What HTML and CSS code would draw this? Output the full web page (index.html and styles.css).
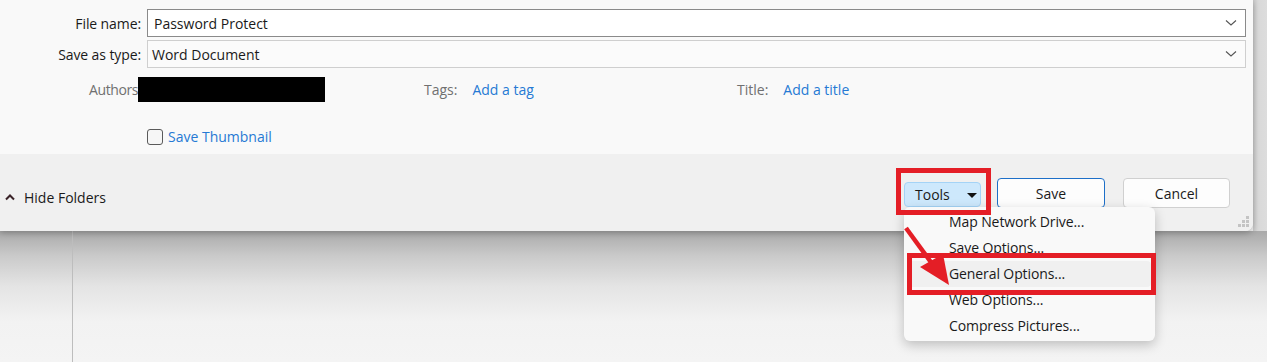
FILE: index.html
```html
<!DOCTYPE html>
<html>
<head>
  <title>Save As</title>
  <link rel="stylesheet" href="styles.css">
</head>
<body>
  <div class="screen">
    <div class="dialog">
      <!-- File fields -->
      <div class="fields">
        <div class="field-row">
          <label class="field-label">File name:</label>
          <div class="combo combo-active">
            <span>Password Protect</span>
            <svg class="chev" width="12" height="8" viewBox="0 0 12 8"><path d="M1 1.5 L6 6 L11 1.5" fill="none" stroke="#555" stroke-width="1.1"/></svg>
          </div>
        </div>
        <div class="field-row">
          <label class="field-label">Save as type:</label>
          <div class="combo">
            <span>Word Document</span>
            <svg class="chev" width="12" height="8" viewBox="0 0 12 8"><path d="M1 1.5 L6 6 L11 1.5" fill="none" stroke="#555" stroke-width="1.1"/></svg>
          </div>
        </div>
        <div class="meta-row">
          <div class="meta meta-authors">
            <span class="meta-label authors-label">Authors</span>
            <span class="redacted"></span>
          </div>
          <div class="meta meta-tags">
            <span class="meta-label">Tags:</span>
            <span class="meta-link">Add a tag</span>
          </div>
          <div class="meta meta-title">
            <span class="meta-label">Title:</span>
            <span class="meta-link">Add a title</span>
          </div>
        </div>
        <div class="thumb-row">
          <span class="checkbox"></span>
          <span class="meta-link">Save Thumbnail</span>
        </div>
      </div>

      <!-- Footer with buttons -->
      <div class="footer">
        <div class="hide-folders">
          <svg width="10" height="7" viewBox="0 0 10 7"><path d="M1 5.5 L5 1.5 L9 5.5" fill="none" stroke="#3a2228" stroke-width="2"/></svg>
          <span>Hide Folders</span>
        </div>
        <div class="buttons">
          <button class="btn btn-tools">Tools <span class="caret"></span></button>
          <button class="btn btn-save">Save</button>
          <button class="btn btn-cancel">Cancel</button>
        </div>
        <svg class="grip" width="12" height="12" viewBox="0 0 12 12">
          <g fill="#c4c4c4">
            <rect x="8" y="0" width="3" height="3"/>
            <rect x="4" y="4" width="3" height="3"/><rect x="8" y="4" width="3" height="3"/>
            <rect x="0" y="8" width="3" height="3"/><rect x="4" y="8" width="3" height="3"/><rect x="8" y="8" width="3" height="3"/>
          </g>
        </svg>
      </div>
    </div>

    <div class="behind">
      <div class="nav-pane"></div>
    </div>

    <!-- Tools dropdown -->
    <ul class="menu">
      <li>Map Network Drive...</li>
      <li>Save Options...</li>
      <li class="hover">General Options...</li>
      <li>Web Options...</li>
      <li>Compress Pictures...</li>
    </ul>

    <!-- Annotations -->
    <div class="mark mark-tools"></div>
    <div class="mark mark-general"></div>
    <svg class="arrow" width="60" height="70" viewBox="0 0 60 70">
      <line x1="3" y1="3" x2="30" y2="40" stroke="#e41e26" stroke-width="4.5"/>
      <polygon points="17,42 40,29 46,60" fill="#e41e26"/>
    </svg>
  </div>
</body>
</html>
```

FILE: styles.css
```css
body {
  margin: 0;
  font-family: 'Open Sans', 'Noto Sans', sans-serif;
  font-size: 14px;
  color: #1a1a1a;
  background: #f3f3f3;
}
.screen {
  position: relative;
  width: 1267px;
  height: 362px;
  overflow: hidden;
  background: linear-gradient(to right, #f3f3f3 1253px, #c9c9c9 1253px, #d9d9d9 1258px, #dddddd 1267px);
}
.dialog {
  width: 1253px;
  border-bottom-right-radius: 8px;
  overflow: hidden;
  box-shadow: 0 2px 6px rgba(0, 0, 0, 0.25);
  position: relative;
  z-index: 1;
}
.fields {
  background: #f9f9f9;
  height: 154px;
  box-sizing: border-box;
  padding-top: 9px;
}
.field-row {
  display: flex;
  align-items: center;
  height: 28px;
  margin-bottom: 3px;
}
.field-label {
  width: 141px;
  text-align: right;
  margin-right: 6px;
  letter-spacing: -0.1px;
}
.combo {
  width: 1099px;
  height: 28px;
  box-sizing: border-box;
  border: 1px solid #cfcfcf;
  background: #fbfbfb;
  display: flex;
  align-items: center;
  justify-content: space-between;
  padding: 0 8px 0 4px;
}
.combo-active {
  border-color: #8a8a8a;
  background: #fff;
  padding-left: 6px;
}
.meta-row {
  display: flex;
  height: 25px;
  align-items: center;
  margin-top: 9px;
}
.meta {
  display: flex;
  align-items: center;
}
.meta-authors {
  margin-left: 89px;
  width: 335px;
}
.authors-label {
  width: 49px;
  white-space: nowrap;
  letter-spacing: -0.4px;
}
.meta-tags {
  width: 313px;
}
.meta-label {
  color: #707070;
}
.meta-tags .meta-label, .meta-title .meta-label {
  margin-right: 15px;
}
.meta-link {
  color: #2679d4;
}
.redacted {
  display: inline-block;
  width: 187px;
  height: 25px;
  background: #000;
}
.thumb-row {
  display: flex;
  align-items: center;
  margin-top: 25px;
  margin-left: 147px;
}
.checkbox {
  width: 14px;
  height: 14px;
  border: 1px solid #5a5a5a;
  border-radius: 3px;
  background: #f6f6f6;
  margin-right: 5px;
}
.footer {
  background: #f0f0f0;
  height: 77px;
  position: relative;
  display: flex;
  align-items: center;
  justify-content: space-between;
}
.hide-folders {
  display: flex;
  align-items: center;
  margin-left: 5px;
  margin-top: 10px;
}
.hide-folders svg {
  margin-right: 9px;
}
.buttons {
  display: flex;
  align-items: center;
  margin-right: 23px;
  margin-top: 1px;
}
.btn {
  font-family: inherit;
  font-size: 14px;
  color: #1a1a1a;
  height: 30px;
  border-radius: 4px;
  background: #fdfdfd;
  border: 1px solid #d0d0d0;
  padding: 0;
}
.btn-tools {
  width: 77px;
  height: 25px;
  margin-top: 2px;
  background: #cde8fc;
  border-color: #a4d3f6;
  text-align: left;
  padding-left: 10px;
  margin-right: 16px;
}
.caret {
  display: inline-block;
  width: 0;
  height: 0;
  border-left: 5px solid transparent;
  border-right: 5px solid transparent;
  border-top: 5px solid #111;
  margin-left: 14px;
  vertical-align: 2px;
}
.btn-save {
  width: 108px;
  border-color: #1d6fc8;
  margin-right: 18px;
}
.btn-cancel {
  width: 107px;
}
.grip {
  position: absolute;
  right: 3px;
  bottom: 3px;
}
.behind {
  height: 131px;
  background: linear-gradient(to bottom, #a9a9a9 0px, #cacaca 25px, #e4e4e4 55px, #f2f2f2 90px, #f4f4f4 131px);
}
.nav-pane {
  width: 73px;
  height: 100%;
  border-right: 1px solid #bdbdbd;
  box-sizing: border-box;
}
.menu {
  position: absolute;
  left: 904px;
  top: 207px;
  width: 251px;
  margin: 0;
  padding: 2px 0 0 0;
  list-style: none;
  background: #f9f9f9;
  border-radius: 6px;
  box-shadow: 0 4px 12px rgba(0, 0, 0, 0.22);
  height: 134px;
  box-sizing: border-box;
  z-index: 2;
}
.menu li {
  height: 26px;
  line-height: 26px;
  padding-left: 41px;
  margin: 0 4px;
  border-radius: 4px;
  letter-spacing: -0.1px;
}
.menu li.hover {
  background: #f0f0f0;
}
.mark {
  position: absolute;
  border: 5px solid #e41e26;
  z-index: 3;
  box-sizing: border-box;
}
.mark-tools {
  left: 896px;
  top: 168px;
  width: 95px;
  height: 47px;
}
.mark-general {
  left: 907px;
  top: 253px;
  width: 249px;
  height: 42px;
}
.arrow {
  position: absolute;
  left: 903px;
  top: 225px;
  z-index: 4;
}
```
